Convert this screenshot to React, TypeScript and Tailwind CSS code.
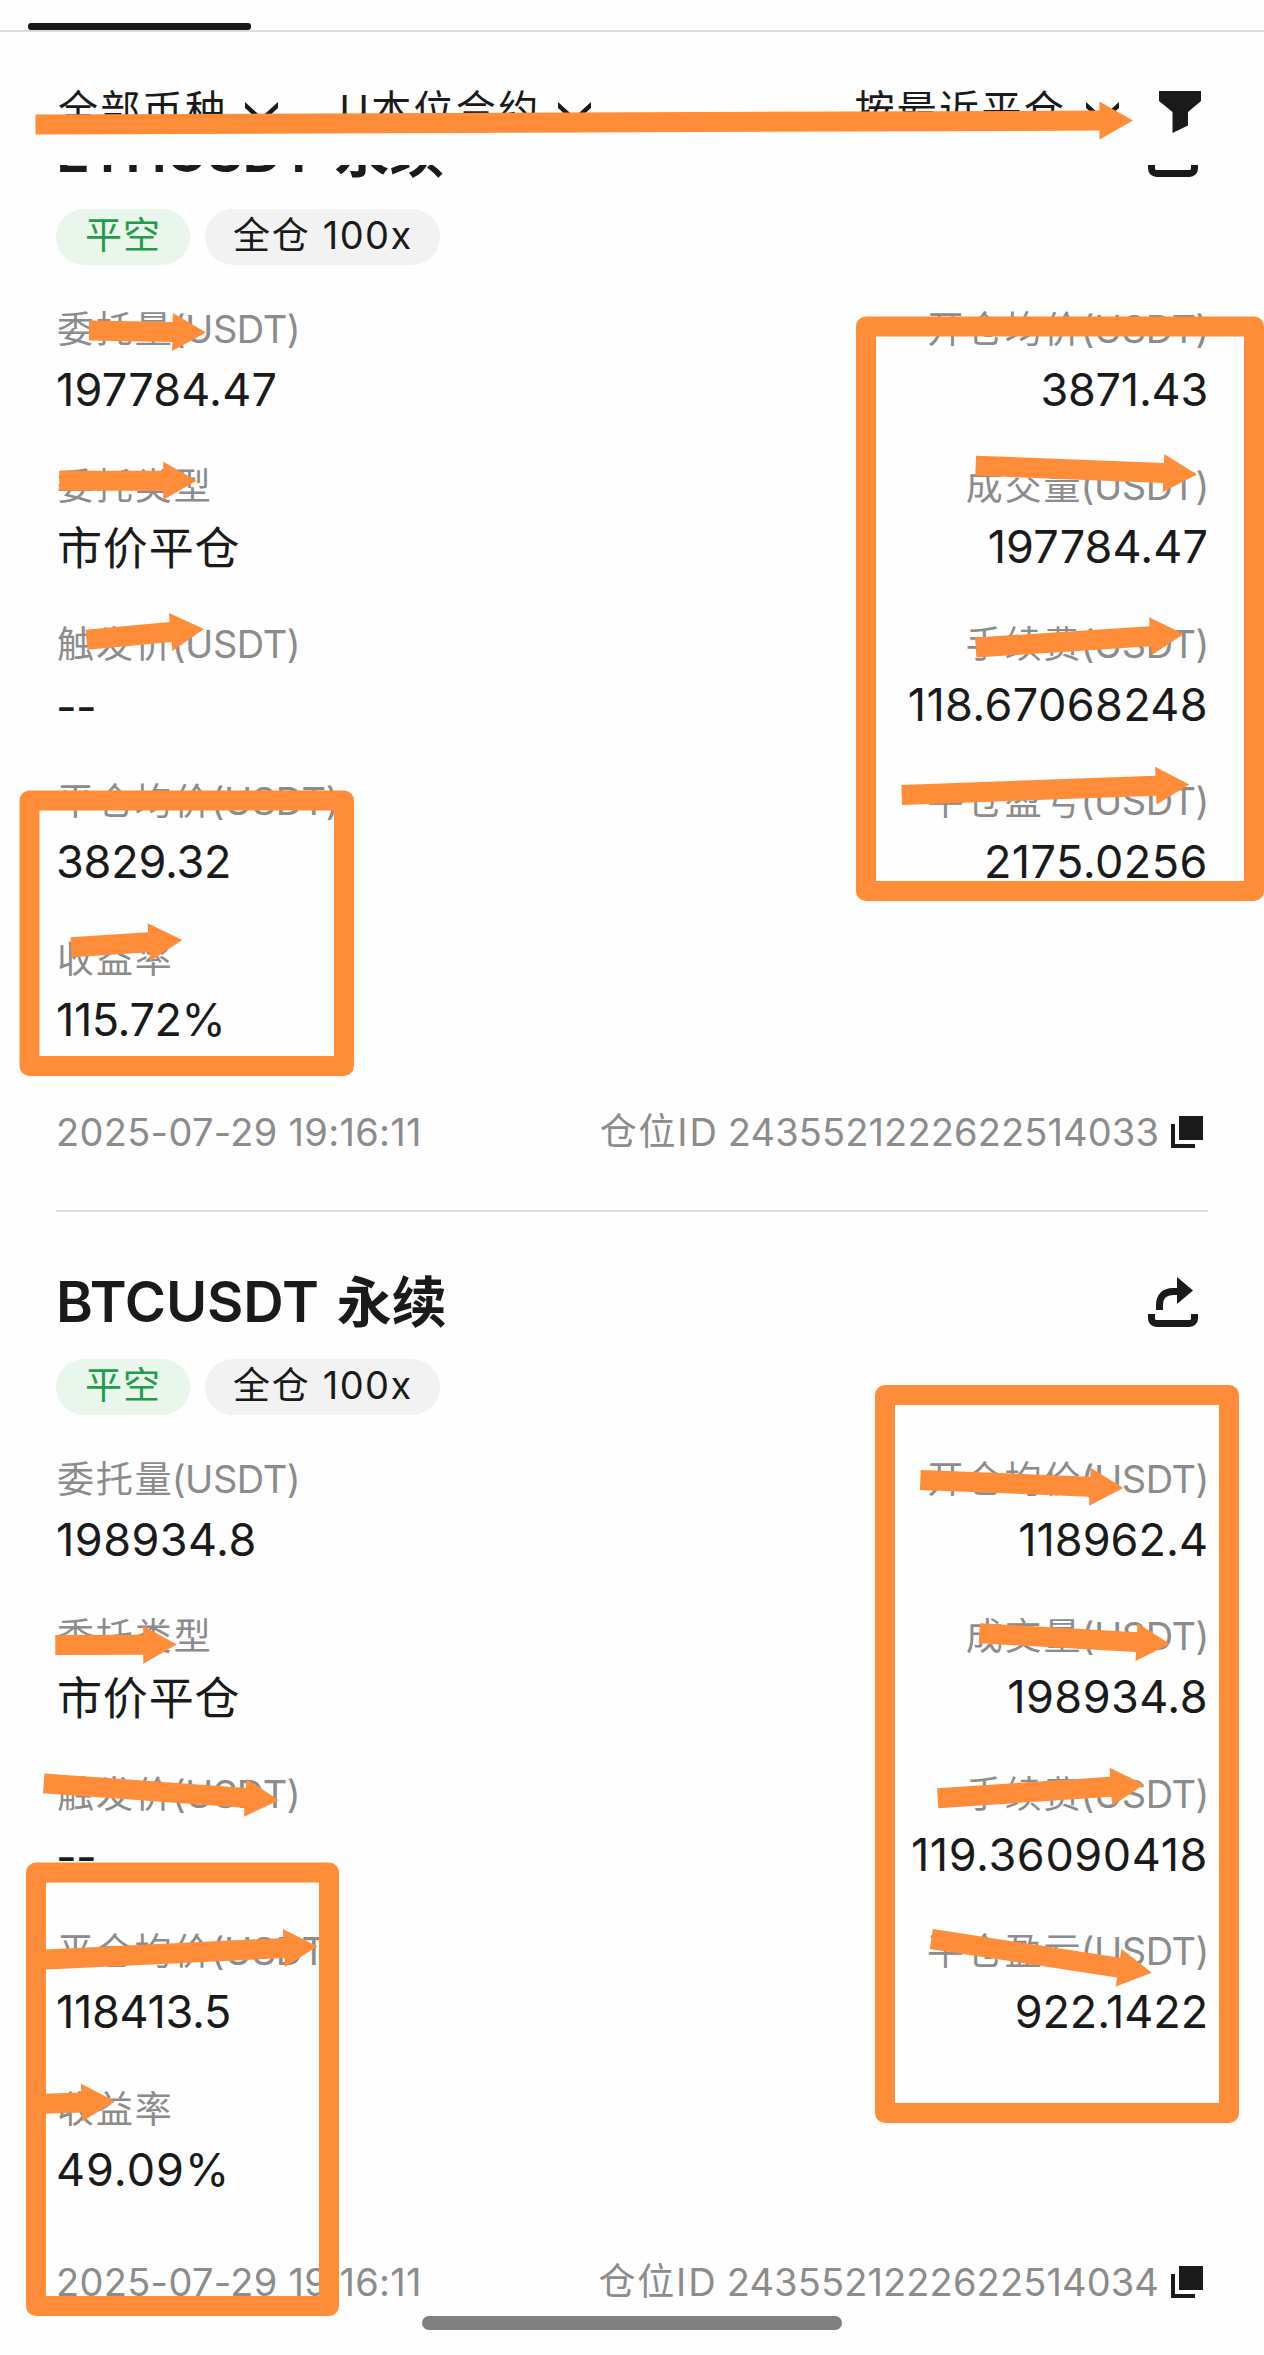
import React from 'react';

interface Field {
    label: string;
    unit?: boolean;
    value: string;
    tracking?: string;
}

interface Position {
    symbol: string;
    symbolTracking: string;
    closedAt: string;
    positionId: string;
    left: Field[];
    right: Field[];
}

interface Arrow {
    from: [number, number];
    to: [number, number];
}

const positions: Position[] = [
    {
        symbol: 'ETHUSDT',
        symbolTracking: 'tracking-[-0.8px]',
        closedAt: '2025-07-29 19:16:11',
        positionId: '2435521222622514033',
        left: [
            { label: '委托量', unit: true, value: '197784.47', tracking: 'tracking-[0.2px]' },
            { label: '委托类型', value: '市价平仓', tracking: 'tracking-[0.83px] pt-[2px] pl-px' },
            { label: '触发价', unit: true, value: '--', tracking: 'tracking-[-0.7px] pt-[2px]' },
            { label: '平仓均价', unit: true, value: '3829.32', tracking: 'tracking-[-0.23px]' },
            { label: '收益率', value: '115.72%', tracking: 'tracking-[-0.42px]' },
        ],
        right: [
            { label: '开仓均价', unit: true, value: '3871.43', tracking: 'tracking-[-0.24px]' },
            { label: '成交量', unit: true, value: '197784.47', tracking: 'tracking-[0.1px]' },
            { label: '手续费', unit: true, value: '118.67068248', tracking: 'tracking-[0.38px]' },
            { label: '平仓盈亏', unit: true, value: '2175.0256', tracking: 'tracking-[0.47px]' },
        ],
    },
    {
        symbol: 'BTCUSDT',
        symbolTracking: 'tracking-[-0.1px]',
        closedAt: '2025-07-29 19:16:11',
        positionId: '2435521222622514034',
        left: [
            { label: '委托量', unit: true, value: '198934.8', tracking: 'tracking-[0.46px]' },
            { label: '委托类型', value: '市价平仓', tracking: 'tracking-[0.83px] pt-[2px] pl-px' },
            { label: '触发价', unit: true, value: '--', tracking: 'tracking-[-0.7px] pt-[2px]' },
            { label: '平仓均价', unit: true, value: '118413.5', tracking: 'tracking-[-0.29px]' },
            { label: '收益率', value: '49.09%', tracking: 'tracking-[1px]' },
        ],
        right: [
            { label: '开仓均价', unit: true, value: '118962.4', tracking: 'tracking-normal' },
            { label: '成交量', unit: true, value: '198934.8', tracking: 'tracking-[0.46px]' },
            { label: '手续费', unit: true, value: '119.36090418', tracking: 'tracking-[0.6px]' },
            { label: '平仓盈亏', unit: true, value: '922.1422', tracking: 'tracking-[-0.1px]' },
        ],
    },
];

// Highlight boxes, measured along the middle of the 20px stroke
const boxes = [
    { x: 866, y: 326.5, width: 388, height: 564.5 },
    { x: 29.5, y: 800.5, width: 314.5, height: 265.5 },
    { x: 885, y: 1395, width: 344, height: 718 },
    { x: 36, y: 1872.5, width: 293, height: 433.5 },
];

const arrows: Arrow[] = [
    { from: [35.5, 124.5], to: [1133, 120.5] },
    { from: [89, 330.5], to: [206, 332.5] },
    { from: [59.3, 480.8], to: [196.7, 480.8] },
    { from: [86.5, 639.7], to: [204, 629] },
    { from: [71.3, 947.3], to: [182.3, 940] },
    { from: [975.7, 465.7], to: [1197, 474.4] },
    { from: [975.7, 647.6], to: [1183.7, 634] },
    { from: [901.7, 795], to: [1189.3, 784.4] },
    { from: [55.3, 1645], to: [176.7, 1644.5] },
    { from: [43.7, 1783.4], to: [278.7, 1800.3] },
    { from: [920.3, 1480], to: [1123.3, 1488] },
    { from: [979.3, 1633.3], to: [1170, 1644] },
    { from: [937.7, 1798.3], to: [1144.3, 1784.5] },
    { from: [931.3, 1939], to: [1151.7, 1972.7] },
    { from: [36, 1960], to: [317.3, 1946.4] },
    { from: [36, 2104], to: [115, 2101.5] },
];

const Chevron: React.FC<{ className: string }> = ({ className }) => (
    <svg className={`h-[21px] w-[33px] shrink-0 ${className}`} viewBox="0 0 33 21" fill="currentColor">
        <path d="M0 0 16.5 15 33 0v6L16.5 21 0 6Z" />
    </svg>
);

const FunnelIcon: React.FC = () => (
    <svg className="ml-10 h-[42px] w-[42px] shrink-0" viewBox="0 0 42 42" fill="currentColor">
        <path d="M0 0H42V10L29 21V34.5L13.5 42V21L0 10Z" />
    </svg>
);

const ShareIcon: React.FC = () => (
    <svg className="mr-[10px] h-[50px] w-[50px]" viewBox="0 0 50 50" fill="none">
        <path d="M3.5 37v4.5a5 5 0 0 0 5 5h33a5 5 0 0 0 5-5V37" stroke="currentColor" strokeWidth="7" />
        <path d="M11.5 33V28C11.5 19.5 16.5 14.5 25 14.5H31" stroke="currentColor" strokeWidth="7" />
        <path d="M29 0 45 13.5 29 27Z" fill="currentColor" />
    </svg>
);

const CopyIcon: React.FC = () => (
    <svg className="mr-[5px] h-8 w-8 text-[#1a1a1a]" viewBox="0 0 32 32" fill="currentColor">
        <path d="M8 0H32V24H8Z" />
        <path d="M0 8H4V28H24V32H0Z" />
    </svg>
);

const FieldItem: React.FC<{ field: Field; alignRight?: boolean }> = ({ field, alignRight }) => (
    <div className={alignRight ? 'text-right' : ''}>
        <div
            className={`h-12 text-[38px] leading-[48px] whitespace-nowrap text-[#8c8c8c] ${alignRight ? '-mr-px' : 'pl-px'}`}
        >
            <span className="text-[37px] tracking-[1.9px]">{field.label}</span>
            {field.unit && <span className="-ml-[2px] tracking-[-0.45px]">(USDT)</span>}
        </div>
        <div className={`mt-[7px] h-[60px] text-[45px] leading-[60px] text-[#1a1a1a] ${field.tracking ?? ''}`}>
            {field.value}
        </div>
    </div>
);

const PositionCard: React.FC<{ position: Position }> = ({ position }) => (
    <article className="mx-14 flex h-[1150px] flex-col border-b-2 border-[#dcdcdc] pt-[60px]">
        <header className="flex h-[60px] items-center justify-between">
            <h2 className="text-[56px] leading-[60px] font-semibold whitespace-nowrap">
                <span className={position.symbolTracking}>{position.symbol}</span>
                <span className="ml-[18px] text-[55px] font-bold">永续</span>
            </h2>
            <ShareIcon />
        </header>

        <div className="mt-[27px] flex h-14 gap-[15px] text-[37px] leading-[53px]">
            <span className="w-[134px] rounded-full bg-[#e8f6ec] text-center tracking-[1px] text-[#239c4a]">平空</span>
            <span className="w-[235px] rounded-full bg-[#f2f2f2] pl-7 tracking-[1.8px] whitespace-nowrap">
                全仓 <span className="text-[38px] tracking-[1.4px]">100x</span>
            </span>
        </div>

        <div className="mt-[39.5px] flex justify-between">
            <div className="flex flex-col gap-[42.5px]">
                {position.left.map((field) => (
                    <FieldItem key={field.label} field={field} />
                ))}
            </div>
            <div className="flex flex-col gap-[42.5px]">
                {position.right.map((field) => (
                    <FieldItem key={field.label} field={field} alignRight />
                ))}
            </div>
        </div>

        <footer className="mt-[58px] flex h-12 items-center justify-between text-[38px] leading-[48px] text-[#8c8c8c]">
            <span className="tracking-[0.3px]">{position.closedAt}</span>
            <span className="flex items-center">
                <span className="text-[37px] tracking-[1.75px]">仓位</span>
                <span className="tracking-[2px]">ID</span>
                <span className="mr-3 ml-[9px] tracking-[0.12px]">{position.positionId}</span>
                <CopyIcon />
            </span>
        </footer>
    </article>
);

const FilterBar: React.FC = () => (
    <div className="flex h-[133px] items-start justify-between pt-[52px] pr-[63px] pl-[58px] text-[40px] leading-[60px] tracking-[2.3px] whitespace-nowrap">
        <div className="flex items-center">
            <span className="-mt-1">全部币种</span>
            <Chevron className="ml-[18px]" />
            <span className="-mt-1 ml-[61px]">U本位合约</span>
            <Chevron className="ml-[18px]" />
        </div>
        <div className="flex items-center">
            <span className="-mt-1">按最近平仓</span>
            <Chevron className="ml-[20px]" />
            <FunnelIcon />
        </div>
    </div>
);

const ArrowMark: React.FC<Arrow> = ({ from, to }) => {
    const dx = to[0] - from[0];
    const dy = to[1] - from[1];
    const length = Math.hypot(dx, dy);
    const angle = (Math.atan2(dy, dx) * 180) / Math.PI;
    const neck = length - 33.5;

    return (
        <path
            d={`M0-10H${neck}V-19L${length} 0 ${neck} 19V10H0Z`}
            transform={`translate(${from[0]} ${from[1]}) rotate(${angle})`}
        />
    );
};

const Annotations: React.FC = () => (
    <svg className="pointer-events-none absolute top-0 left-0 h-[2355px] w-[1264px]" viewBox="0 0 1264 2355" fill="#ff8c38">
        {boxes.map((box) => (
            <rect key={box.y} {...box} fill="none" stroke="#ff8c38" strokeWidth="20" strokeLinejoin="round" />
        ))}
        {arrows.map((arrow) => (
            <ArrowMark key={arrow.from.join()} {...arrow} />
        ))}
    </svg>
);

export default function App() {
    return (
        <div className="relative h-[2355px] w-[1264px] overflow-hidden bg-[#fefefe] font-['Inter','Noto_Sans_CJK_SC',sans-serif] text-[#1a1a1a]">
            <div className="flex h-8 items-end border-b-2 border-[#dcdcdc] pl-7">
                <div className="h-[7px] w-[223px] rounded-[3px] bg-[#1a1a1a]" />
            </div>
            <FilterBar />

            {/* The list is scrolled, so the first card starts above the visible area */}
            <main className="h-[2190px] overflow-hidden">
                <div className="-mt-[103px]">
                    {positions.map((position) => (
                        <PositionCard key={position.positionId} position={position} />
                    ))}
                </div>
            </main>

            <Annotations />
            <div className="absolute bottom-[25px] left-[422px] h-[14px] w-[420px] rounded-full bg-[#808080]" />
        </div>
    );
}
